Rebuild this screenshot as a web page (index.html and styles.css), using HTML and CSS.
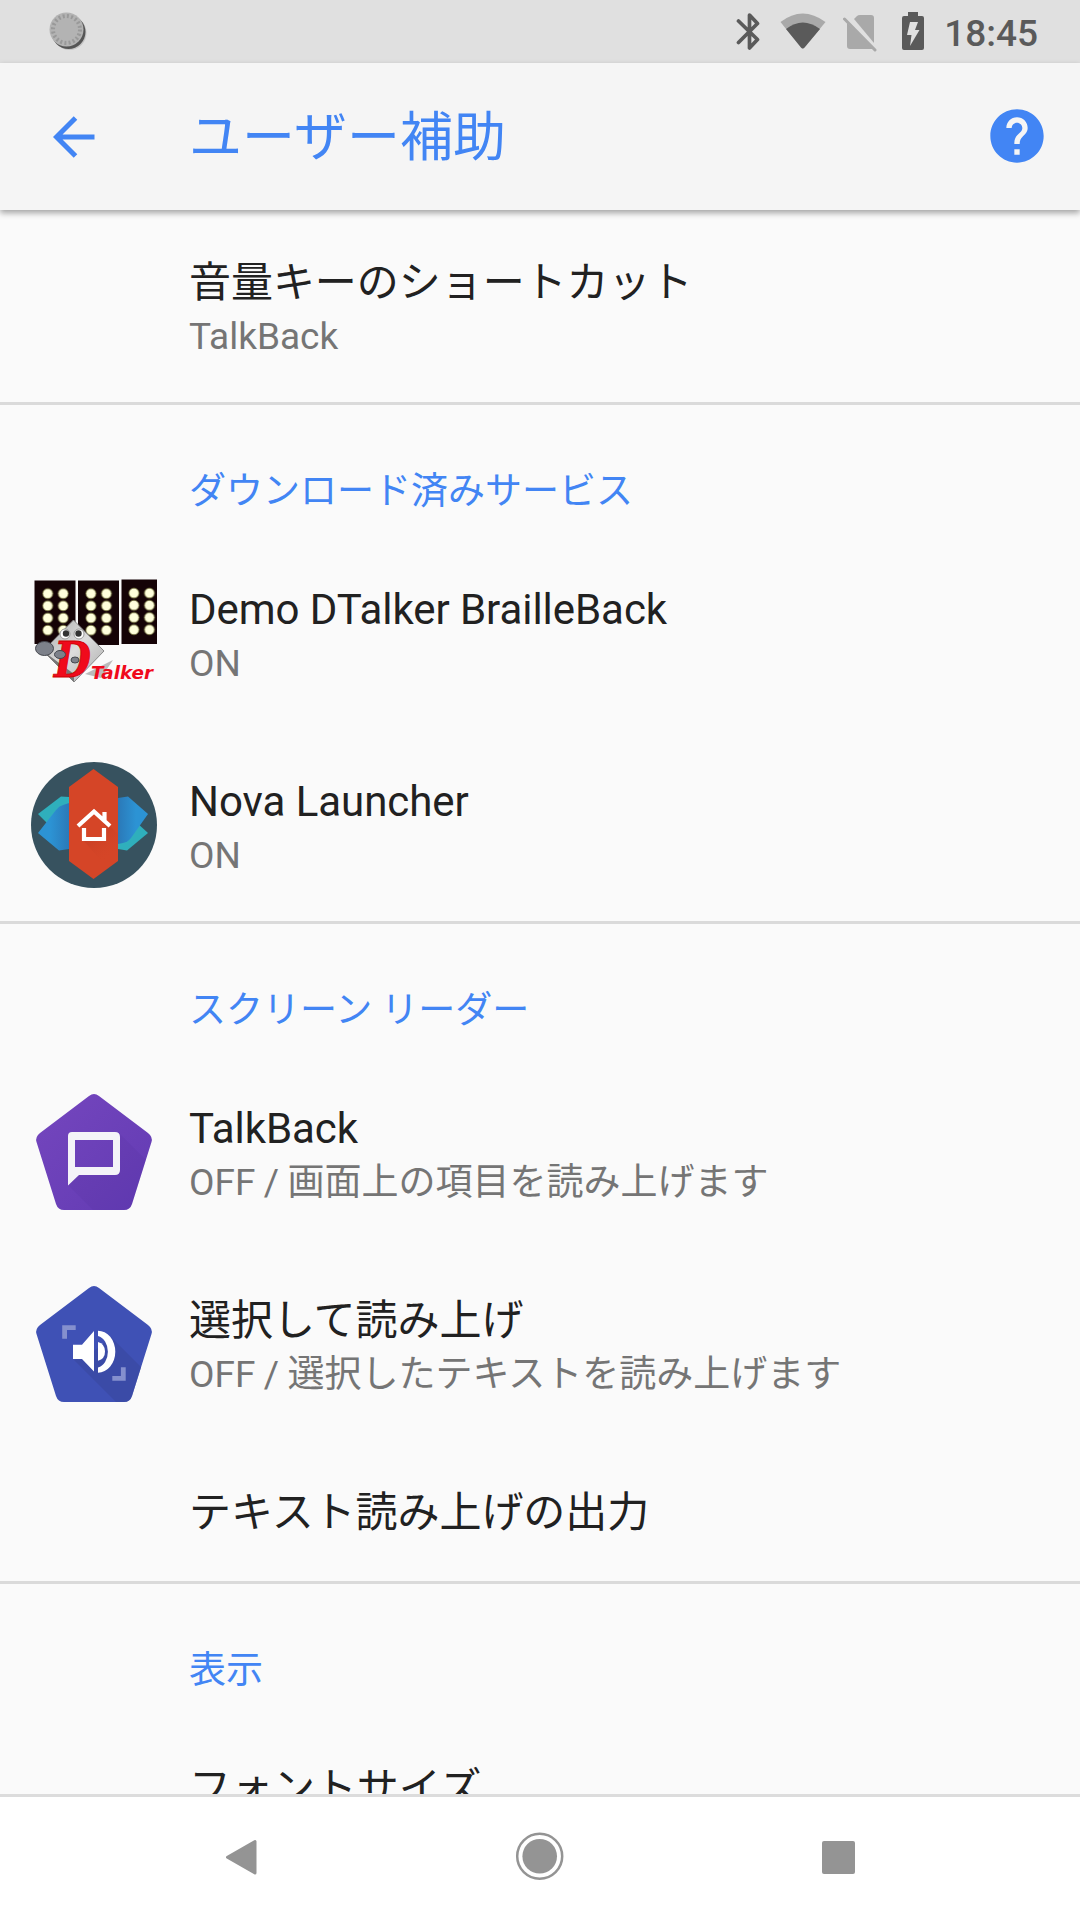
FILE: index.html
```html
<!DOCTYPE html>
<html lang="ja">
<head>
    <meta charset="UTF-8">
    <meta name="viewport" content="width=device-width, initial-scale=1.0">
    <title>ユーザー補助</title>
    <link rel="stylesheet" href="styles.css">
</head>
<body>
    <div class="screen">
        <div class="status-bar">
            <svg class="status-notification" width="40" height="42" viewBox="0 0 40 42">
                <circle cx="20.500" cy="21" r="17" fill="#c4c4c4"/>
                <circle cx="19.500" cy="20" r="17" fill="#555"/>
                <circle cx="17.500" cy="17.500" r="17" fill="#b3b3b3"/>
                <circle cx="17.500" cy="17.500" r="13.500" fill="none" stroke="#999" stroke-width="4" stroke-dasharray="2 2.240"/>
            </svg>
            <div class="status-icons">
                <svg class="status-bluetooth" width="26" height="40" viewBox="0 0 26 40" fill="none" stroke="#5a5a5a" stroke-width="3.700" stroke-linecap="round" stroke-linejoin="round">
                    <path d="M2.500 9L21.500 27.500L13.500 36V3L21.500 11.500L2.500 30.500"/>
                </svg>
                <svg class="status-wifi" width="46" height="38" viewBox="0 0 46 38">
                    <path d="M0.500 9Q22.500 -8 45.500 9L24.500 34.500Q22.800 36.500 21 34.500Z" fill="#a9a9a9"/>
                    <path d="M6 16Q22.800 3 40 16L24.500 34.500Q22.800 36.500 21 34.500Z" fill="#5a5a5a"/>
                </svg>
                <svg class="status-sim" width="35" height="38" viewBox="0 0 35 38">
                    <path d="M11 5L14 2Q15 1 17 1H28Q31 1 31 4V29Z" fill="#a9a9a9"/>
                    <path d="M4 9L30 35H7Q4 35 4 32Z" fill="#a9a9a9"/>
                    <path d="M1.500 5L32 36" stroke="#a9a9a9" stroke-width="3" stroke-linecap="round"/>
                </svg>
                <svg class="status-battery" width="22" height="38" viewBox="0 0 22 38">
                    <path d="M6 0H16V4H20Q22 4 22 6V36Q22 38 20 38H2Q0 38 0 36V6Q0 4 2 4H6Z" fill="#5a5a5a"/>
                    <path d="M8 10H16L13 18H17.500L8 34L9.500 23H5Z" fill="#e0e0e0"/>
                </svg>
                <span class="status-time">18:45</span>
            </div>
        </div>

        <header class="app-bar">
            <svg class="back" width="42" height="42" viewBox="0 0 42 42" fill="none" stroke="#4285f4" stroke-width="5">
                <path d="M41.500 21H4M22.500 2L3.500 21L22.500 40"/>
            </svg>
            <h1>ユーザー補助</h1>
            <svg class="help" width="64" height="64" viewBox="0 0 24 24">
                <path fill="#4285f4" d="M12 2C6.480 2 2 6.480 2 12s4.480 10 10 10 10-4.480 10-10S17.520 2 12 2zm1 17h-2v-2h2v2zm2.070-7.750l-.9.920C13.450 12.900 13 13.500 13 15h-2v-.5c0-1.100.450-2.100 1.170-2.830l1.240-1.260c.370-.360.590-.860.590-1.410 0-1.100-.9-2-2-2s-2 .9-2 2H8c0-2.210 1.790-4 4-4s4 1.790 4 4c0 .880-.360 1.680-.930 2.250z"/>
            </svg>
        </header>

        <main class="settings">
            <section>
                <div class="item">
                    <div class="item-icon"></div>
                    <div class="item-text">
                        <div class="title">音量キーのショートカット</div>
                        <div class="summary">TalkBack</div>
                    </div>
                </div>
            </section>

            <section>
                <h2>ダウンロード済みサービス</h2>
                <div class="item">
                    <div class="item-icon">
                        <svg width="126" height="126" viewBox="0 2 126 126">
                            <defs>
                                <linearGradient id="dice" x1="0" y1="0" x2="1" y2="1">
                                    <stop offset="0" stop-color="#aaa"/>
                                    <stop offset="0.500" stop-color="#ddd"/>
                                    <stop offset="1" stop-color="#aaa"/>
                                </linearGradient>
                                <pattern id="dots" width="15.500" height="12.200" patternUnits="userSpaceOnUse">
                                    <circle cx="7.750" cy="6.100" r="5" fill="#ffffdc" stroke="#77773c" stroke-width="0.800"/>
                                </pattern>
                            </defs>
                            <path d="M3.500 12.500H44.500V76H3.500ZM47 12.500H88V77H47ZM90.500 11.500H126V76H90.500Z" fill="#150306"/>
                            <g transform="translate(9 19.500)"><rect width="31" height="48.800" fill="url(#dots)"/></g>
                            <g transform="translate(52.200 19.500)"><rect width="31" height="48.800" fill="url(#dots)"/></g>
                            <g transform="translate(95.200 19)"><rect width="31" height="48.800" fill="url(#dots)"/></g>
                            <path d="M54 106L82 92L70 110Z" fill="#bbb"/>
                            <path d="M42.500 52L73 83L43 114L12 83Z" fill="url(#dice)" stroke="#888" stroke-width="1"/>
                            <path d="M12 83L43 106V114Z" fill="#777"/>
                            <circle cx="34" cy="66" r="5" fill="#fff" stroke="#999"/>
                            <circle cx="48" cy="66" r="5" fill="#fff" stroke="#999"/>
                            <circle cx="35" cy="65.500" r="3.200" fill="#333"/>
                            <circle cx="47.500" cy="65.500" r="3.200" fill="#333"/>
                            <ellipse cx="13.500" cy="80.500" rx="9" ry="7" fill="#7d818a" stroke="#45484f"/>
                            <text class="logo-d" x="23" y="108.500" textLength="37" lengthAdjust="spacingAndGlyphs">D</text>
                            <ellipse cx="29" cy="86.500" rx="5.500" ry="4" fill="#7d818a" stroke="#45484f"/>
                            <ellipse cx="44" cy="92" rx="4" ry="3" fill="#7d818a" stroke="#45484f"/>
                            <text class="logo-talker" x="60" y="110.500" textLength="62" lengthAdjust="spacingAndGlyphs">Talker</text>
                        </svg>
                    </div>
                    <div class="item-text">
                        <div class="title">Demo DTalker BrailleBack</div>
                        <div class="summary">ON</div>
                    </div>
                </div>
                <div class="item">
                    <div class="item-icon">
                        <svg width="126" height="126" viewBox="0 0 126 126">
                            <defs>
                                <linearGradient id="blueLeft">
                                    <stop offset="0.400" stop-color="#2c93d4"/>
                                    <stop offset="1" stop-color="#2b79b8"/>
                                </linearGradient>
                                <linearGradient id="blueRight">
                                    <stop offset="0" stop-color="#2b79b8"/>
                                    <stop offset="0.600" stop-color="#2c93d4"/>
                                </linearGradient>
                                <linearGradient id="redShade" x1="0" y1="0" x2="0.600" y2="1">
                                    <stop offset="0" stop-color="#b03520"/>
                                    <stop offset="0.800" stop-color="#d54527" stop-opacity="0"/>
                                </linearGradient>
                                <clipPath id="novaRed"><path d="M62.500 7L87 25V99L62.500 117L38 99V25Z"/></clipPath>
                            </defs>
                            <circle cx="63" cy="63" r="63" fill="#37525f"/>
                            <path d="M38 35L30 34.500L7 52L20 65L38 60Z" fill="#2fafbc"/>
                            <path d="M38 41L32 43Q28 44 25 48L7 71L28 88.500L38 87Z" fill="url(#blueLeft)"/>
                            <path d="M87 87L96 88.500L117 71L105 60L87 68Z" fill="#2fafbc"/>
                            <path d="M87 36L97 34.500L117 52L100 76Q97 80 92 81L87 82Z" fill="url(#blueRight)"/>
                            <path d="M62.500 7L87 25V99L62.500 117L38 99V25Z" fill="#d54527"/>
                            <path d="M68 53L98 83L80 110L52 78L75 78V66Z" fill="url(#redShade)" clip-path="url(#novaRed)"/>
                            <path d="M47 64L63 49.500L79 64M73.500 58V50M53 66V77H73V66" fill="none" stroke="#fff" stroke-width="4.200"/>
                        </svg>
                    </div>
                    <div class="item-text">
                        <div class="title">Nova Launcher</div>
                        <div class="summary">ON</div>
                    </div>
                </div>
            </section>

            <section>
                <h2>スクリーン リーダー</h2>
                <div class="item">
                    <div class="item-icon">
                        <svg width="126" height="126" viewBox="0 0 126 126">
                            <defs>
                                <linearGradient id="purple" x1="0" y1="0" x2="1" y2="1">
                                    <stop offset="0" stop-color="#7546be"/>
                                    <stop offset="1" stop-color="#623bb3"/>
                                </linearGradient>
                                <clipPath id="pentagon"><path d="M58 7Q63 3 68 7L117 44Q122 48 120.500 53L101 115Q99 121 93 121H33Q27 121 25 115L5.500 53Q4 48 9 44Z"/></clipPath>
                            </defs>
                            <path d="M58 7Q63 3 68 7L117 44Q122 48 120.500 53L101 115Q99 121 93 121H33Q27 121 25 115L5.500 53Q4 48 9 44Z" fill="url(#purple)"/>
                            <path d="M89 45L126 82V126H67L38 97L48 84H84Z" fill="#4a2b96" opacity="0.120" clip-path="url(#pentagon)"/>
                            <path fill-rule="evenodd" d="M41 43H84Q89 43 89 48V81Q89 86 84 86H48L37 96.500V47Q37 43 41 43ZM44 51V78H82V51Z" fill="#f4f3f8"/>
                        </svg>
                    </div>
                    <div class="item-text">
                        <div class="title">TalkBack</div>
                        <div class="summary">OFF / 画面上の項目を読み上げます</div>
                    </div>
                </div>
                <div class="item">
                    <div class="item-icon">
                        <svg width="126" height="126" viewBox="0 0 126 126">
                            <path d="M58 7Q63 3 68 7L117 44Q122 48 120.500 53L101 115Q99 121 93 121H33Q27 121 25 115L5.500 53Q4 48 9 44Z" fill="#3f51b5"/>
                            <path d="M80 56L116 92V126H90L43 79L63 70Z" fill="#38479f" opacity="0.600" clip-path="url(#pentagon)"/>
                            <path d="M33.600 57.700V46.600H44.700M92.300 86.300V97.300H81.300" fill="none" stroke="#8590ce" stroke-width="4.800"/>
                            <path d="M42 63.700H51L63 50V90.500L51 78H42Z" fill="#fff"/>
                            <path d="M67 61Q74 63 74 70.500T67 79.700Z" fill="#fff"/>
                            <path d="M67 49.700A17.300 21 0 0 1 67 91.700V86.500A12 16 0 0 0 67 55Z" fill="#fff"/>
                        </svg>
                    </div>
                    <div class="item-text">
                        <div class="title">選択して読み上げ</div>
                        <div class="summary">OFF / 選択したテキストを読み上げます</div>
                    </div>
                </div>
                <div class="item item-single">
                    <div class="item-icon"></div>
                    <div class="item-text">
                        <div class="title">テキスト読み上げの出力</div>
                    </div>
                </div>
            </section>

            <section>
                <h2>表示</h2>
                <div class="item">
                    <div class="item-icon"></div>
                    <div class="item-text">
                        <div class="title">フォントサイズ</div>
                    </div>
                </div>
            </section>
        </main>

        <nav class="nav-bar">
            <svg width="54" height="54" viewBox="0 0 54 54">
                <path d="M41 11.500V43L13.500 27.200Z" fill="#949494" stroke="#949494" stroke-width="3" stroke-linejoin="round"/>
            </svg>
            <svg width="54" height="54" viewBox="0 0 54 54">
                <circle cx="26.700" cy="26.300" r="22.500" fill="none" stroke="#949494" stroke-width="2.500"/>
                <circle cx="26.700" cy="26.300" r="17.300" fill="#949494"/>
            </svg>
            <svg width="54" height="54" viewBox="0 0 54 54">
                <rect x="11" y="11" width="33" height="33" rx="2" fill="#949494"/>
            </svg>
        </nav>
    </div>
</body>
</html>
```

FILE: styles.css
```css
body {
    margin: 0;
    font-family: Roboto, "Noto Sans CJK JP", sans-serif;
    background-color: #fafafa;
}

svg {
    display: block;
    flex-shrink: 0;
}

h1, h2 {
    margin: 0;
    font-weight: 400;
    color: #4285f4;
}

.screen {
    display: flex;
    flex-direction: column;
    width: 1080px;
    height: 1920px;
    overflow: hidden;
}

/* Status bar */
.status-bar {
    display: flex;
    justify-content: space-between;
    height: 63px;
    padding: 0 42px 0 49px;
    box-sizing: border-box;
    background-color: #e0e0e0;
    flex-shrink: 0;
}

.status-notification {
    margin-top: 12px;
}

.status-icons {
    display: flex;
    align-items: flex-start;
}

.status-bluetooth {
    margin-top: 12px;
    margin-right: 18px;
}

.status-wifi {
    margin-top: 13px;
    margin-right: 17px;
}

.status-sim {
    margin-top: 14px;
    margin-right: 24px;
}

.status-battery {
    margin-top: 12px;
    margin-right: 20px;
}

.status-time {
    font-size: 37px;
    line-height: 68px;
    font-weight: 500;
    color: #5a5a5a;
}

/* Title bar */
.app-bar {
    position: relative;
    z-index: 1;
    display: flex;
    align-items: center;
    height: 147px;
    padding: 0 31px 0 53px;
    box-sizing: border-box;
    background-color: #f5f5f5;
    box-shadow: 0 3px 6px rgba(0, 0, 0, 0.35);
    flex-shrink: 0;
}

.app-bar h1 {
    flex: 1;
    margin-left: 94px;
    padding-top: 2px;
    font-size: 53px;
    line-height: 72px;
}

.help {
    margin-bottom: 2px;
}

/* List */
.settings {
    flex: 1;
    overflow: hidden;
    min-height: 0;
}

section + section {
    border-top: 3px solid #dadada;
}

h2 {
    height: 132px;
    padding: 60px 0 0 189px;
    box-sizing: border-box;
    font-size: 37px;
    line-height: 54px;
}

.item {
    display: flex;
    height: 192px;
}

.item-single {
    height: 141px;
}

.item-icon {
    width: 126px;
    padding: 33px 32px 0 31px;
}

.item-text {
    padding-top: 43px;
}

.title {
    font-size: 42px;
    line-height: 60px;
    letter-spacing: -0.05px;
    color: #212121;
}

.summary {
    font-size: 37px;
    line-height: 48px;
    word-spacing: -0.8px;
    color: #757575;
}

/* DTalker logo lettering */
.logo-d {
    font-family: "DejaVu Serif", serif;
    font-size: 49px;
    font-weight: 700;
    font-style: italic;
    fill: #f00a1c;
    stroke: #c00;
    stroke-width: 0.8px;
}

.logo-talker {
    font-family: "DejaVu Sans", sans-serif;
    font-size: 17px;
    font-weight: 700;
    font-style: italic;
    fill: #f00a1c;
}

/* Navigation bar */
.nav-bar {
    display: flex;
    justify-content: space-between;
    height: 126px;
    padding: 33px 215px 0 214px;
    box-sizing: border-box;
    border-top: 3px solid #dcdcdc;
    background-color: #fff;
    flex-shrink: 0;
}
```
